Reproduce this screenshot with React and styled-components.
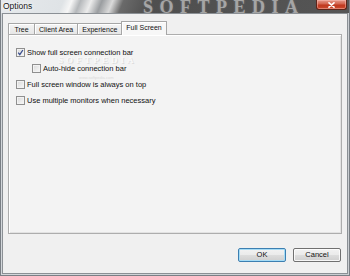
import React from 'react';
import styled, { createGlobalStyle } from 'styled-components';

const GlobalStyle = createGlobalStyle`
  html,
  body {
    margin: 0;
    padding: 0;
  }

  body {
    width: 350px;
    height: 276px;
    overflow: hidden;
    font-family: 'Liberation Sans', Arial, sans-serif;
  }
`;

const TABS = ['Tree', 'Client Area', 'Experience', 'Full Screen'];

const OPTIONS = [
  { label: 'Show full screen connection bar', checked: true },
  { label: 'Auto-hide connection bar', indent: true },
  { label: 'Full screen window is always on top' },
  { label: 'Use multiple monitors when necessary' },
];

const App = () => {
  return (
    <>
      <GlobalStyle />
      <Window>
        <TitleBar>
          <Title>Options</Title>
          <TitleMark>SOFTPEDIA</TitleMark>
          <CloseBtn aria-label="Close">
            <svg width="7" height="6" viewBox="0 0 7 6">
              <path
                d="M1 0.8 L6 5.2 M6 0.8 L1 5.2"
                stroke="#fff"
                strokeWidth="1.6"
                strokeLinecap="round"
              />
            </svg>
          </CloseBtn>
        </TitleBar>

        <Client>
          <TabStrip>
            {TABS.map(name => (
              <Tab key={name} active={name === 'Full Screen'}>
                {name}
              </Tab>
            ))}
          </TabStrip>

          <Panel>
            <PanelMark>SOFTPEDIA</PanelMark>
            <SmallMark>www.softpedia.com</SmallMark>
            {OPTIONS.map(opt => (
              <OptionRow key={opt.label} indent={opt.indent}>
                <CheckBox>
                  {opt.checked && (
                    <svg width="7" height="7" viewBox="0 0 7 7">
                      <path
                        d="M1.2 3.6 L2.8 5.6 L5.9 1"
                        fill="none"
                        stroke="#3b4f8f"
                        strokeWidth="1.3"
                      />
                    </svg>
                  )}
                </CheckBox>
                <Label>{opt.label}</Label>
              </OptionRow>
            ))}
          </Panel>

          <BtnRow>
            <DialogBtn primary>OK</DialogBtn>
            <DialogBtn>Cancel</DialogBtn>
          </BtnRow>
        </Client>
      </Window>
    </>
  );
};

export default App;

const Window = styled.div`
  display: flex;
  flex-direction: column;

  width: 350px;
  height: 276px;
  padding: 0 1px 1px;
  box-sizing: border-box;

  border: 1px solid #7a7f85;
  border-top: none;
  background: linear-gradient(to right, #d3d7db, #c9cdd1);
`;

const TitleBar = styled.div`
  position: relative;
  display: flex;
  justify-content: space-between;
  align-items: flex-start;

  height: 14px;
  margin: 0 -1px;
  padding-left: 2px;
  overflow: hidden;

  background: linear-gradient(
    112deg,
    #e6e9ec 0,
    #dfe3e6 58px,
    #f6f6f6 66px,
    #b4b7ba 74px,
    #ececec 84px,
    #9a9da0 94px,
    #dadada 104px,
    #6a6a6a 114px,
    #4f4f4f 140px,
    #555 100%
  );
`;

const Title = styled.span`
  margin-top: 1px;

  color: #151515;
  font-size: 8.5px;
  line-height: 11px;
  text-shadow: 0 0 4px #fff, 0 0 2px #fff;
`;

const TitleMark = styled.span`
  position: absolute;
  top: 0;
  left: 142px;

  color: #a5a5a5;
  font-family: 'Liberation Serif', 'Times New Roman', serif;
  font-size: 18px;
  font-weight: 700;
  line-height: 14px;
  letter-spacing: 6.5px;
  text-shadow: 0 0 2px #777;
`;

const CloseBtn = styled.div`
  position: relative;
  display: flex;
  justify-content: center;
  align-items: center;

  width: 31px;
  height: 10px;
  margin-right: 2px;
  box-sizing: border-box;

  border: 1px solid #5e2419;
  border-top: none;
  border-radius: 0 0 3px 3px;
  background: linear-gradient(#e59a8c 0, #d2614b 45%, #c0381f 55%, #c9492d 100%);
  box-shadow: inset 0 0 0 1px rgba(255, 200, 190, 0.45);
`;

const Client = styled.div`
  flex: 1;
  display: flex;
  flex-direction: column;

  padding: 7px 5px 11px;

  border: 1px solid #8b9095;
  background-color: #f0f0f0;
`;

const TabStrip = styled.div`
  display: flex;
  align-items: flex-end;

  height: 13px;
`;

const Tab = styled.div`
  position: relative;
  z-index: ${props => (props.active ? 2 : 1)};
  display: flex;
  justify-content: center;
  align-items: center;

  min-width: 27px;
  height: ${props => (props.active ? '14px' : '11px')};
  margin-left: -1px;
  margin-right: ${props => (props.active ? '-1px' : '0')};
  margin-bottom: ${props => (props.active ? '-1px' : '0')};
  padding: 0 4px ${props => (props.active ? '2px' : '0')};
  box-sizing: border-box;

  border: 1px solid #a6a6a6;
  border-bottom: none;
  border-radius: 1px 1px 0 0;
  background: ${props =>
    props.active ? '#f7f7f7' : 'linear-gradient(#f4f4f4, #e6e6e6)'};
  box-shadow: inset 1px 1px 0 #fff;
  color: #111;
  font-size: 7px;
  white-space: nowrap;

  &:first-child {
    margin-left: 0;
  }
`;

const Panel = styled.div`
  position: relative;
  display: flex;
  flex-direction: column;

  height: 200px;
  padding: 9px 0 0 7px;
  box-sizing: border-box;

  border: 1px solid #adadad;
  background-color: #f3f3f3;
  box-shadow: inset 1px 1px 0 #fff, inset -1px -1px 0 #e2e2e2;
`;

const PanelMark = styled.span`
  position: absolute;
  top: 22px;
  left: 49px;

  color: #f9f9f9;
  font-family: 'Liberation Serif', 'Times New Roman', serif;
  font-size: 9px;
  font-weight: 700;
  line-height: 7px;
  letter-spacing: 3px;
  text-shadow: 1px 1px 0 #dcdcdc;
  pointer-events: none;
`;

const SmallMark = styled.span`
  position: absolute;
  top: 41px;
  left: 70px;

  color: #dadada;
  font-size: 4px;
  line-height: 4px;
  pointer-events: none;
`;

const OptionRow = styled.div`
  position: relative;
  display: flex;
  align-items: center;

  height: 16px;
  padding-left: ${props => (props.indent ? '16px' : '0')};
`;

const CheckBox = styled.span`
  display: flex;
  justify-content: center;
  align-items: center;

  width: 9px;
  height: 9px;
  box-sizing: border-box;

  border: 1px solid #8f8f8f;
  background: linear-gradient(135deg, #d9d9d9, #f8f8f8);
  box-shadow: inset 0 0 0 1px #f2f2f2;
`;

const Label = styled.span`
  margin-left: 2px;

  color: #111;
  font-size: 7.5px;
  line-height: 9px;
  white-space: nowrap;
`;

const BtnRow = styled.div`
  display: flex;
  justify-content: flex-end;
  gap: 7px;

  margin-top: 14px;
  padding-right: 1px;
`;

const DialogBtn = styled.button`
  width: 48px;
  height: 14px;
  padding: 0;
  box-sizing: border-box;

  border: 1px solid ${props => (props.primary ? '#3c7fb1' : '#707070')};
  border-radius: 2px;
  background: linear-gradient(#f2f2f2 0, #ebebeb 48%, #dddddd 52%, #cfcfcf 100%);
  box-shadow: inset 0 0 0 1px
    ${props => (props.primary ? '#a6dcf6' : 'rgba(255, 255, 255, 0.8)')};
  color: #111;
  font-family: 'Liberation Sans', Arial, sans-serif;
  font-size: 7.5px;
  line-height: 12px;
`;
